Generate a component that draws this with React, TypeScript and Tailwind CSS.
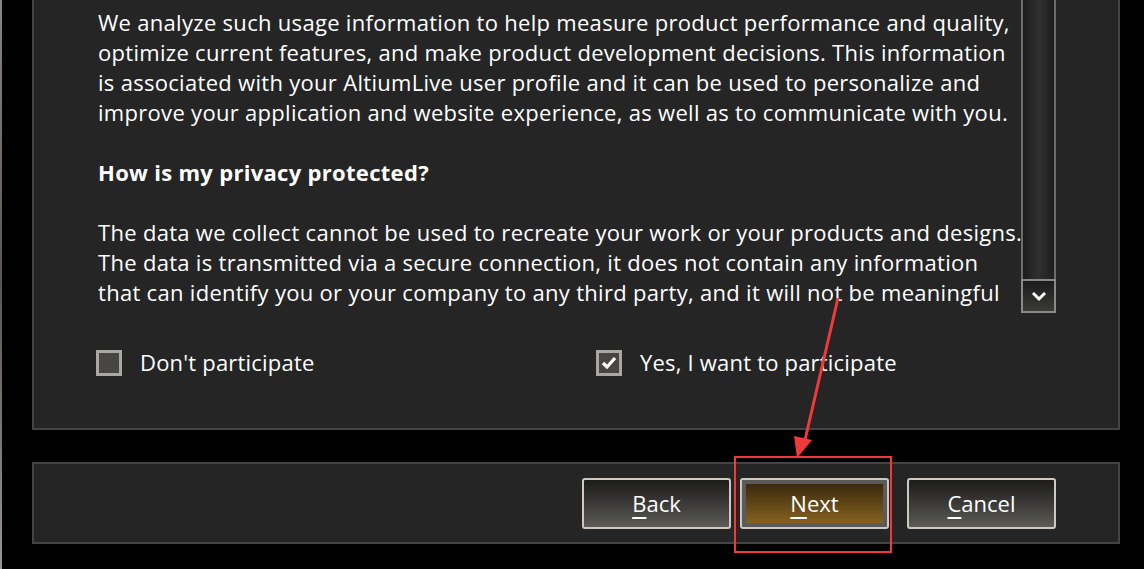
import React from 'react';

const font = { fontFamily: '"Open Sans", "Noto Sans", sans-serif' };

const Checkbox = ({ checked, label }: { checked?: boolean; label: string }) => (
	<div className="flex items-center gap-[18px]">
		<div className="w-[26px] h-[26px] border-[3px] border-[#a9a7a3] bg-[#474644] flex items-center justify-center">
			{checked && (
				<svg width="16" height="14" viewBox="0 0 16 14">
					<path d="M2 7 L6 11 L14 2" stroke="#ffffff" strokeWidth="3.2" fill="none" />
				</svg>
			)}
		</div>
		<span className="text-[22px] tracking-[0.2px] text-white">{label}</span>
	</div>
);

const WizardButton = ({ label, accel, primary }: { label: string; accel: string; primary?: boolean }) => (
	<button
		className={`w-[149px] h-[51px] rounded-[3px] border-2 border-[#cfc8c0] flex items-stretch ${
			primary ? 'bg-[#5a5a58] p-[4px]' : 'bg-linear-to-b from-[#1c1c1b] to-[#5d5b57]'
		}`}
	>
		<div
			className={`flex-1 flex items-center justify-center text-[22px] text-white ${
				primary ? 'bg-linear-to-b from-[#3c2a0e] to-[#85621f]' : ''
			}`}
		>
			<span>
				<span className="underline underline-offset-[5px] decoration-2">{accel}</span>
				{label.slice(1)}
			</span>
		</div>
	</button>
);

export default function App() {
	return (
		<div className="relative w-[1144px] h-[569px] bg-black overflow-hidden flex" style={font}>
			<div className="w-[2px] h-full bg-linear-to-b from-[#8a8580] via-[#5a5550] to-[#9a958f]" />
			<div className="ml-[30px] w-[1088px] flex flex-col">
				{/* main panel */}
				<div className="h-[430px] bg-[#252525] border-l-2 border-r-2 border-b-2 border-[#444444] flex flex-col">
					<div className="flex h-[313px]">
						<div className="flex-1 pl-[64px] pt-[7px] overflow-hidden whitespace-nowrap text-[22px] tracking-[0.3px] leading-[30px] text-white">
							<p>
								We analyze such usage information to help measure product performance and quality,
								<br />
								optimize current features, and make product development decisions. This information
								<br />
								is associated with your AltiumLive user profile and it can be used to personalize and
								<br />
								improve your application and website experience, as well as to communicate with you.
							</p>
							<p className="mt-[30px] font-bold">How is my privacy protected?</p>
							<p className="mt-[30px]">
								The data we collect cannot be used to recreate your work or your products and designs.
								<br />
								The data is transmitted via a secure connection, it does not contain any information
								<br />
								that can identify you or your company to any third party, and it will not be meaningful
							</p>
						</div>
						{/* scrollbar */}
						<div className="w-[35px] mr-[62px] flex flex-col">
							<div className="flex-1 border-x-2 border-[#6c6c6c] bg-linear-to-r from-[#1c1c1c] via-[#303030] to-[#1e1e1e]" />
							<div className="h-[34px] border-2 border-[#8a8a8a] bg-linear-to-b from-[#1c1c1c] to-[#3a3a38] flex items-center justify-center">
								<svg width="16" height="12" viewBox="0 0 16 12">
									<path d="M2 3 L8 9 L14 3" stroke="#ffffff" strokeWidth="3" fill="none" />
								</svg>
							</div>
						</div>
					</div>
					<div className="flex pl-[62px] mt-[33px]">
						<div className="w-[500px]">
							<Checkbox label="Don't participate" />
						</div>
						<Checkbox checked label="Yes, I want to participate" />
					</div>
				</div>
				{/* footer */}
				<div className="mt-[32px] h-[82px] bg-[#252525] border-2 border-[#444444] flex items-center justify-end gap-[9px] pr-[62px]">
					<WizardButton label="Back" accel="B" />
					<WizardButton label="Next" accel="N" primary />
					<div className="ml-[9px]">
						<WizardButton label="Cancel" accel="C" />
					</div>
				</div>
			</div>

			{/* annotation */}
			<div className="absolute left-[734px] top-[456px] w-[158px] h-[97px] border-2 border-[#f03a3a]" />
			<svg className="absolute left-0 top-0" width="1144" height="569">
				<line x1="838" y1="298" x2="805" y2="440" stroke="#f03a3a" strokeWidth="3" />
				<polygon points="797,458 794,436 812,440" fill="#f03a3a" />
			</svg>
		</div>
	);
}
